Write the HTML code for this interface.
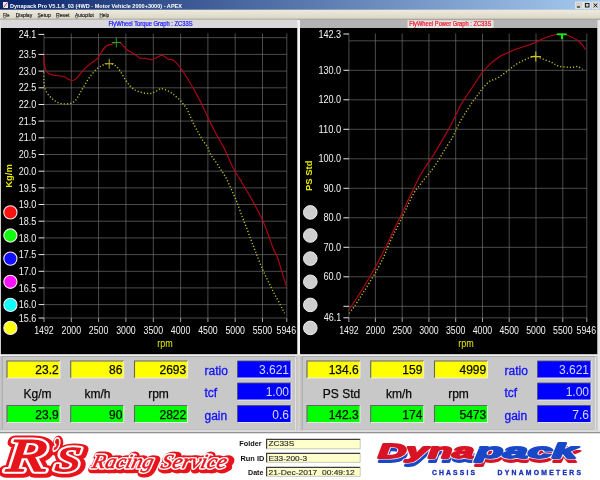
<!DOCTYPE html>
<html lang="en"><head><meta charset="utf-8"><title>Dynapack Pro V5.1.6_03 (4WD - Motor Vehicle 2000+3000) - APEX</title>
<style>html,body{margin:0;padding:0;background:#d4d0c8;overflow:hidden}svg{display:block;filter:blur(0.5px)}</style>
</head><body>
<svg width="600" height="480" viewBox="0 0 600 480" font-family="Liberation Sans, Arial, sans-serif">
<defs><linearGradient id="tb" x1="0" x2="1" y1="0" y2="0"><stop offset="0" stop-color="#0a246a"/><stop offset="1" stop-color="#a6caf0"/></linearGradient><linearGradient id="mb" x1="0" x2="0" y1="0" y2="1"><stop offset="0" stop-color="#eeebdc"/><stop offset="1" stop-color="#d8d4c6"/></linearGradient></defs>
<rect width="600" height="480" fill="#d4d0c8"/>
<rect x="0" y="0" width="600" height="10" fill="url(#tb)"/>
<rect x="3" y="2" width="5" height="6" fill="#e8e8f0"/><path d="M3.5 7.5L7.5 2.5" stroke="#c03030" stroke-width="1"/>
<text x="10.0" y="7.7" font-size="5.8" fill="#fff" text-anchor="start" font-weight="bold" textLength="172.0" lengthAdjust="spacingAndGlyphs" >Dynapack Pro V5.1.6_03 (4WD - Motor Vehicle 2000+3000) - APEX</text>
<rect x="575.5" y="2" width="7" height="6.5" fill="#d4d0c8" stroke="#fff" stroke-width="0.5"/>
<rect x="583.5" y="2" width="7" height="6.5" fill="#d4d0c8" stroke="#fff" stroke-width="0.5"/>
<rect x="592.0" y="2" width="7" height="6.5" fill="#d4d0c8" stroke="#fff" stroke-width="0.5"/>
<path d="M577 7h3" stroke="#000" stroke-width="1"/>
<rect x="585.5" y="3.5" width="3.5" height="3.5" fill="none" stroke="#000" stroke-width="0.8"/>
<path d="M593.7 3.5l3.6 3.6M597.3 3.5l-3.6 3.6" stroke="#000" stroke-width="0.9"/>
<rect x="0" y="9.7" width="600" height="10" fill="url(#mb)"/>
<text x="3.0" y="16.7" font-size="5.9" fill="#111" text-anchor="start" font-weight="normal" textLength="6.5" lengthAdjust="spacingAndGlyphs" stroke="#111" stroke-width="0.15">File</text>
<path d="M3.0 17.8h3" stroke="#333" stroke-width="0.5"/>
<text x="15.7" y="16.7" font-size="5.9" fill="#111" text-anchor="start" font-weight="normal" textLength="16.5" lengthAdjust="spacingAndGlyphs" stroke="#111" stroke-width="0.15">Display</text>
<path d="M15.7 17.8h3" stroke="#333" stroke-width="0.5"/>
<text x="37.5" y="16.7" font-size="5.9" fill="#111" text-anchor="start" font-weight="normal" textLength="13.2" lengthAdjust="spacingAndGlyphs" stroke="#111" stroke-width="0.15">Setup</text>
<path d="M37.5 17.8h3" stroke="#333" stroke-width="0.5"/>
<text x="56.0" y="16.7" font-size="5.9" fill="#111" text-anchor="start" font-weight="normal" textLength="13.5" lengthAdjust="spacingAndGlyphs" stroke="#111" stroke-width="0.15">Reset</text>
<path d="M56.0 17.8h3" stroke="#333" stroke-width="0.5"/>
<text x="75.0" y="16.7" font-size="5.9" fill="#111" text-anchor="start" font-weight="normal" textLength="18.8" lengthAdjust="spacingAndGlyphs" stroke="#111" stroke-width="0.15">Autopilot</text>
<path d="M75.0 17.8h3" stroke="#333" stroke-width="0.5"/>
<text x="99.5" y="16.7" font-size="5.9" fill="#111" text-anchor="start" font-weight="normal" textLength="9.5" lengthAdjust="spacingAndGlyphs" stroke="#111" stroke-width="0.15">Help</text>
<path d="M99.5 17.8h3" stroke="#333" stroke-width="0.5"/>
<rect x="0" y="18.8" width="600" height="0.8" fill="#85826f"/>
<rect x="0" y="19.6" width="298" height="8.4" fill="#d9d9dc"/>
<rect x="300" y="19.6" width="300" height="8.4" fill="#b4b4b4"/>
<rect x="407.5" y="20.3" width="86" height="7.7" fill="#e4e4e4"/>
<text x="150.5" y="26.2" font-size="6.6" fill="#1414ff" text-anchor="middle" font-weight="normal" textLength="84.0" lengthAdjust="spacingAndGlyphs" stroke="#1414ff" stroke-width="0.2">FlyWheel Torque Graph : ZC33S</text>
<text x="450.3" y="26.2" font-size="6.6" fill="#f01024" text-anchor="middle" font-weight="normal" textLength="82.0" lengthAdjust="spacingAndGlyphs" stroke="#f01024" stroke-width="0.2">FlyWheel Power Graph : ZC33S</text>
<rect x="0.5" y="28" width="297" height="326.5" fill="#000"/>
<rect x="300" y="28" width="297.5" height="326.5" fill="#000"/>
<path d="M44.0 318V322M71.3 318V322M98.6 318V322M125.9 318V322M153.3 318V322M180.6 318V322M207.9 318V322M235.2 318V322M262.5 318V322M286.8 318V322" stroke="#b4b4b4" stroke-width="0.9" fill="none"/>
<path d="M44.0 37.7H286.8M44.0 54.4H286.8M44.0 71.1H286.8M44.0 87.8H286.8M44.0 104.5H286.8M44.0 121.1H286.8M44.0 137.8H286.8M44.0 154.5H286.8M44.0 171.2H286.8M44.0 187.9H286.8M44.0 204.5H286.8M44.0 221.2H286.8M44.0 237.9H286.8M44.0 254.6H286.8M44.0 271.3H286.8M44.0 287.9H286.8M44.0 304.6H286.8M44.0 318.0H286.8M44.0 33.5V318M71.3 33.5V318M98.6 33.5V318M125.9 33.5V318M153.3 33.5V318M180.6 33.5V318M207.9 33.5V318M235.2 33.5V318M262.5 33.5V318M286.8 33.5V318" stroke="#7e7e7e" stroke-width="0.6" fill="none"/>
<path d="M38.5 54.4H44.0M38.5 71.1H44.0M38.5 87.8H44.0M38.5 104.5H44.0M38.5 121.1H44.0M38.5 137.8H44.0M38.5 154.5H44.0M38.5 171.2H44.0M38.5 187.9H44.0M38.5 204.5H44.0M38.5 221.2H44.0M38.5 237.9H44.0M38.5 254.6H44.0M38.5 271.3H44.0M38.5 287.9H44.0M38.5 304.6H44.0M38.5 318.0H44.0M38.5 34.4H44.0" stroke="#e8e8e8" stroke-width="1" fill="none"/>
<text x="36.2" y="38.0" font-size="10.2" fill="#f4f4f4" text-anchor="end" font-weight="normal" textLength="17.5" lengthAdjust="spacingAndGlyphs" >24.1</text>
<text x="36.2" y="58.0" font-size="10.2" fill="#f4f4f4" text-anchor="end" font-weight="normal" textLength="17.5" lengthAdjust="spacingAndGlyphs" >23.5</text>
<text x="36.2" y="74.7" font-size="10.2" fill="#f4f4f4" text-anchor="end" font-weight="normal" textLength="17.5" lengthAdjust="spacingAndGlyphs" >23.0</text>
<text x="36.2" y="91.4" font-size="10.2" fill="#f4f4f4" text-anchor="end" font-weight="normal" textLength="17.5" lengthAdjust="spacingAndGlyphs" >22.5</text>
<text x="36.2" y="108.1" font-size="10.2" fill="#f4f4f4" text-anchor="end" font-weight="normal" textLength="17.5" lengthAdjust="spacingAndGlyphs" >22.0</text>
<text x="36.2" y="124.7" font-size="10.2" fill="#f4f4f4" text-anchor="end" font-weight="normal" textLength="17.5" lengthAdjust="spacingAndGlyphs" >21.5</text>
<text x="36.2" y="141.4" font-size="10.2" fill="#f4f4f4" text-anchor="end" font-weight="normal" textLength="17.5" lengthAdjust="spacingAndGlyphs" >21.0</text>
<text x="36.2" y="158.1" font-size="10.2" fill="#f4f4f4" text-anchor="end" font-weight="normal" textLength="17.5" lengthAdjust="spacingAndGlyphs" >20.5</text>
<text x="36.2" y="174.8" font-size="10.2" fill="#f4f4f4" text-anchor="end" font-weight="normal" textLength="17.5" lengthAdjust="spacingAndGlyphs" >20.0</text>
<text x="36.2" y="191.5" font-size="10.2" fill="#f4f4f4" text-anchor="end" font-weight="normal" textLength="17.5" lengthAdjust="spacingAndGlyphs" >19.5</text>
<text x="36.2" y="208.1" font-size="10.2" fill="#f4f4f4" text-anchor="end" font-weight="normal" textLength="17.5" lengthAdjust="spacingAndGlyphs" >19.0</text>
<text x="36.2" y="224.8" font-size="10.2" fill="#f4f4f4" text-anchor="end" font-weight="normal" textLength="17.5" lengthAdjust="spacingAndGlyphs" >18.5</text>
<text x="36.2" y="241.5" font-size="10.2" fill="#f4f4f4" text-anchor="end" font-weight="normal" textLength="17.5" lengthAdjust="spacingAndGlyphs" >18.0</text>
<text x="36.2" y="258.2" font-size="10.2" fill="#f4f4f4" text-anchor="end" font-weight="normal" textLength="17.5" lengthAdjust="spacingAndGlyphs" >17.5</text>
<text x="36.2" y="274.9" font-size="10.2" fill="#f4f4f4" text-anchor="end" font-weight="normal" textLength="17.5" lengthAdjust="spacingAndGlyphs" >17.0</text>
<text x="36.2" y="291.5" font-size="10.2" fill="#f4f4f4" text-anchor="end" font-weight="normal" textLength="17.5" lengthAdjust="spacingAndGlyphs" >16.5</text>
<text x="36.2" y="308.2" font-size="10.2" fill="#f4f4f4" text-anchor="end" font-weight="normal" textLength="17.5" lengthAdjust="spacingAndGlyphs" >16.0</text>
<text x="36.2" y="321.6" font-size="10.2" fill="#f4f4f4" text-anchor="end" font-weight="normal" textLength="17.5" lengthAdjust="spacingAndGlyphs" >15.6</text>
<text x="44.0" y="334.0" font-size="10.2" fill="#f4f4f4" text-anchor="middle" font-weight="normal" textLength="19.5" lengthAdjust="spacingAndGlyphs" >1492</text>
<text x="71.3" y="334.0" font-size="10.2" fill="#f4f4f4" text-anchor="middle" font-weight="normal" textLength="19.5" lengthAdjust="spacingAndGlyphs" >2000</text>
<text x="98.6" y="334.0" font-size="10.2" fill="#f4f4f4" text-anchor="middle" font-weight="normal" textLength="19.5" lengthAdjust="spacingAndGlyphs" >2500</text>
<text x="125.9" y="334.0" font-size="10.2" fill="#f4f4f4" text-anchor="middle" font-weight="normal" textLength="19.5" lengthAdjust="spacingAndGlyphs" >3000</text>
<text x="153.3" y="334.0" font-size="10.2" fill="#f4f4f4" text-anchor="middle" font-weight="normal" textLength="19.5" lengthAdjust="spacingAndGlyphs" >3500</text>
<text x="180.6" y="334.0" font-size="10.2" fill="#f4f4f4" text-anchor="middle" font-weight="normal" textLength="19.5" lengthAdjust="spacingAndGlyphs" >4000</text>
<text x="207.9" y="334.0" font-size="10.2" fill="#f4f4f4" text-anchor="middle" font-weight="normal" textLength="19.5" lengthAdjust="spacingAndGlyphs" >4500</text>
<text x="235.2" y="334.0" font-size="10.2" fill="#f4f4f4" text-anchor="middle" font-weight="normal" textLength="19.5" lengthAdjust="spacingAndGlyphs" >5000</text>
<text x="262.5" y="334.0" font-size="10.2" fill="#f4f4f4" text-anchor="middle" font-weight="normal" textLength="19.5" lengthAdjust="spacingAndGlyphs" >5500</text>
<text x="286.3" y="334.0" font-size="10.2" fill="#f4f4f4" text-anchor="middle" font-weight="normal" textLength="19.5" lengthAdjust="spacingAndGlyphs" >5946</text>
<text x="165.0" y="346.5" font-size="10" fill="#e8e800" text-anchor="middle" font-weight="normal" textLength="15.5" lengthAdjust="spacingAndGlyphs" >rpm</text>
<text transform="translate(12.3 176) rotate(-90)" font-size="9.5" font-weight="bold" fill="#e8e800" text-anchor="middle" textLength="23.5" lengthAdjust="spacingAndGlyphs">Kg/m</text>
<path d="M43.7 55.0C43.8 56.4 43.9 60.8 44.2 63.3C44.6 65.8 45.0 68.3 45.8 70.0C46.6 71.7 47.7 72.8 49.2 73.7C50.7 74.6 52.6 75.1 55.0 75.5C57.4 75.9 61.1 75.7 63.3 76.3C65.5 76.9 66.8 78.5 68.3 79.2C69.8 79.9 71.2 80.5 72.5 80.5C73.8 80.5 74.5 80.2 75.8 79.2C77.0 78.2 78.5 76.0 80.0 74.2C81.5 72.4 83.3 70.0 85.0 68.3C86.7 66.6 87.9 65.9 90.0 64.2C92.1 62.5 95.5 60.4 97.5 58.3C99.5 56.2 100.2 53.8 101.7 51.7C103.2 49.6 105.0 47.0 106.7 45.8C108.4 44.5 110.1 44.8 111.7 44.2C113.3 43.7 114.9 42.8 116.3 42.5C117.7 42.2 118.8 42.0 120.0 42.5C121.2 43.0 122.0 44.5 123.3 45.8C124.5 47.0 125.8 48.7 127.5 50.0C129.2 51.3 131.2 52.2 133.3 53.5C135.4 54.8 138.1 57.2 140.0 58.0C141.9 58.8 143.1 58.0 145.0 58.3C146.9 58.6 149.8 59.8 151.7 59.7C153.6 59.6 155.0 58.2 156.7 57.5C158.4 56.8 160.3 55.4 161.7 55.3C163.1 55.2 163.9 56.1 165.0 56.7C166.1 57.4 166.9 58.6 168.3 59.2C169.7 59.8 171.6 59.3 173.3 60.3C175.0 61.3 176.6 63.1 178.3 65.0C180.0 66.9 181.6 69.2 183.3 71.7C185.0 74.2 186.6 77.2 188.3 80.0C190.0 82.8 191.6 85.4 193.3 88.3C195.0 91.2 196.6 94.3 198.3 97.5C200.0 100.7 201.4 103.5 203.3 107.5C205.2 111.5 208.1 117.7 210.0 121.7C211.9 125.7 213.3 128.5 215.0 131.7C216.7 134.9 218.3 137.8 220.0 140.8C221.7 143.9 223.5 146.9 225.0 150.0C226.5 153.1 227.7 155.9 229.2 159.2C230.7 162.5 232.4 166.7 234.2 170.0C236.0 173.3 238.1 176.0 240.0 179.2C241.9 182.4 243.9 185.9 245.8 189.2C247.8 192.5 249.8 195.7 251.7 199.2C253.6 202.7 255.6 206.2 257.5 210.0C259.4 213.8 261.5 217.5 263.3 221.7C265.1 225.9 266.6 230.5 268.3 235.0C270.0 239.5 271.8 244.9 273.3 248.7C274.8 252.4 276.2 254.2 277.5 257.5C278.8 260.8 279.7 264.7 280.8 268.3C281.9 271.9 283.3 276.3 284.2 279.2C285.1 282.1 285.9 284.7 286.2 285.8" stroke="#c00018" stroke-width="1.05" fill="none" stroke-linejoin="round"/>
<path d="M43.7 72.5C43.8 74.6 43.7 81.7 44.2 85.0C44.7 88.3 45.5 90.3 46.7 92.5C48.0 94.7 50.0 96.7 51.7 98.3C53.4 99.9 54.8 101.1 56.7 102.0C58.6 102.9 60.9 103.6 63.3 103.8C65.6 104.0 68.7 103.9 70.8 103.3C72.9 102.7 74.3 101.7 75.8 100.0C77.3 98.3 78.6 95.7 80.0 93.3C81.4 90.9 82.5 88.6 84.2 85.8C85.9 83.0 87.8 79.6 90.0 76.7C92.2 73.8 95.1 70.3 97.5 68.3C99.9 66.3 102.2 65.3 104.2 64.5C106.2 63.7 107.4 63.6 109.2 63.7C111.0 63.8 113.2 64.1 115.0 65.3C116.8 66.5 118.3 68.5 120.0 70.8C121.7 73.1 123.3 76.7 125.0 79.2C126.7 81.7 128.3 84.2 130.0 86.0C131.7 87.8 133.3 89.0 135.0 90.0C136.7 91.0 138.2 91.5 140.0 92.0C141.8 92.5 143.9 93.1 145.8 93.3C147.8 93.5 149.9 93.7 151.7 93.3C153.5 92.9 155.2 91.5 156.7 90.8C158.2 90.0 159.4 89.0 160.8 88.8C162.2 88.6 163.3 88.9 165.0 89.5C166.7 90.1 169.1 91.5 170.8 92.5C172.5 93.5 173.5 94.5 175.0 95.8C176.5 97.0 178.6 98.6 180.0 100.0C181.4 101.4 182.2 102.8 183.3 104.2C184.4 105.6 185.6 106.6 186.7 108.5C187.8 110.4 188.8 113.0 190.0 115.8C191.2 118.5 192.8 122.2 194.2 125.0C195.6 127.8 196.9 130.0 198.3 132.5C199.7 135.0 201.0 137.6 202.5 140.0C204.0 142.4 206.2 144.5 207.5 146.7C208.8 148.9 208.8 151.0 210.0 153.3C211.2 155.7 213.3 158.3 215.0 160.8C216.7 163.3 218.6 166.2 220.0 168.3C221.4 170.4 222.2 171.5 223.3 173.3C224.4 175.1 225.4 176.7 226.7 179.2C227.9 181.7 229.4 185.2 230.8 188.3C232.2 191.4 233.8 194.6 235.0 197.5C236.2 200.4 237.1 202.5 238.3 205.8C239.6 209.1 241.1 213.8 242.5 217.5C243.9 221.2 245.3 224.6 246.7 228.3C248.1 232.0 249.6 236.2 250.8 239.5C252.1 242.8 253.1 245.4 254.2 248.3C255.3 251.2 256.1 253.2 257.5 256.7C258.9 260.2 261.0 265.6 262.5 269.2C264.0 272.8 265.3 275.4 266.7 278.3C268.1 281.2 269.4 283.9 270.8 286.7C272.2 289.5 273.6 292.4 275.0 295.0C276.4 297.6 277.9 300.1 279.2 302.5C280.4 304.9 281.6 307.4 282.5 309.2C283.4 311.0 284.2 312.6 284.5 313.3" stroke="#bcbc28" stroke-width="1.4" fill="none" stroke-dasharray="1.2 2.0"/>
<path d="M111.8 42.5h9M116.3 37.5v10" stroke="#1ca824" stroke-width="1.0" fill="none"/>
<path d="M104.7 63.7h9M109.2 58.7v10" stroke="#b8b020" stroke-width="1.0" fill="none"/>
<circle cx="10.4" cy="212.4" r="6.6" fill="#ff1010" stroke="#f8eaea" stroke-width="1.1"/>
<circle cx="10.4" cy="235.5" r="6.6" fill="#10ff10" stroke="#f8eaea" stroke-width="1.1"/>
<circle cx="10.4" cy="258.6" r="6.6" fill="#1010ff" stroke="#f8eaea" stroke-width="1.1"/>
<circle cx="10.4" cy="281.8" r="6.6" fill="#ff10ff" stroke="#f8eaea" stroke-width="1.1"/>
<circle cx="10.4" cy="304.9" r="6.6" fill="#10ffff" stroke="#f8eaea" stroke-width="1.1"/>
<circle cx="10.4" cy="327.9" r="6.6" fill="#ffff10" stroke="#f8eaea" stroke-width="1.1"/>
<path d="M348.9 318V322M375.4 318V322M402.2 318V322M428.9 318V322M455.7 318V322M482.5 318V322M509.2 318V322M536.0 318V322M562.8 318V322M586.8 318V322" stroke="#b4b4b4" stroke-width="0.9" fill="none"/>
<path d="M348.9 40.8H586.8M348.9 70.3H586.8M348.9 99.8H586.8M348.9 129.3H586.8M348.9 158.8H586.8M348.9 188.3H586.8M348.9 217.8H586.8M348.9 247.3H586.8M348.9 276.8H586.8M348.9 306.3H586.8M348.9 317.8H586.8M348.9 33.5V318M375.4 33.5V318M402.2 33.5V318M428.9 33.5V318M455.7 33.5V318M482.5 33.5V318M509.2 33.5V318M536.0 33.5V318M562.8 33.5V318M586.8 33.5V318" stroke="#7e7e7e" stroke-width="0.6" fill="none"/>
<path d="M343.4 70.3H348.9M343.4 99.8H348.9M343.4 129.3H348.9M343.4 158.8H348.9M343.4 188.3H348.9M343.4 217.8H348.9M343.4 247.3H348.9M343.4 276.8H348.9M343.4 306.3H348.9M343.4 317.8H348.9M343.4 34.0H348.9" stroke="#e8e8e8" stroke-width="1" fill="none"/>
<text x="341.2" y="37.6" font-size="10.2" fill="#f4f4f4" text-anchor="end" font-weight="normal" textLength="22.8" lengthAdjust="spacingAndGlyphs" >142.3</text>
<text x="341.2" y="73.9" font-size="10.2" fill="#f4f4f4" text-anchor="end" font-weight="normal" textLength="22.8" lengthAdjust="spacingAndGlyphs" >130.0</text>
<text x="341.2" y="103.4" font-size="10.2" fill="#f4f4f4" text-anchor="end" font-weight="normal" textLength="22.8" lengthAdjust="spacingAndGlyphs" >120.0</text>
<text x="341.2" y="132.9" font-size="10.2" fill="#f4f4f4" text-anchor="end" font-weight="normal" textLength="22.8" lengthAdjust="spacingAndGlyphs" >110.0</text>
<text x="341.2" y="162.4" font-size="10.2" fill="#f4f4f4" text-anchor="end" font-weight="normal" textLength="22.8" lengthAdjust="spacingAndGlyphs" >100.0</text>
<text x="341.2" y="191.9" font-size="10.2" fill="#f4f4f4" text-anchor="end" font-weight="normal" textLength="17.8" lengthAdjust="spacingAndGlyphs" >90.0</text>
<text x="341.2" y="221.4" font-size="10.2" fill="#f4f4f4" text-anchor="end" font-weight="normal" textLength="17.8" lengthAdjust="spacingAndGlyphs" >80.0</text>
<text x="341.2" y="250.9" font-size="10.2" fill="#f4f4f4" text-anchor="end" font-weight="normal" textLength="17.8" lengthAdjust="spacingAndGlyphs" >70.0</text>
<text x="341.2" y="280.4" font-size="10.2" fill="#f4f4f4" text-anchor="end" font-weight="normal" textLength="17.8" lengthAdjust="spacingAndGlyphs" >60.0</text>
<text x="341.2" y="321.4" font-size="10.2" fill="#f4f4f4" text-anchor="end" font-weight="normal" textLength="17.5" lengthAdjust="spacingAndGlyphs" >46.1</text>
<text x="348.9" y="334.0" font-size="10.2" fill="#f4f4f4" text-anchor="middle" font-weight="normal" textLength="19.5" lengthAdjust="spacingAndGlyphs" >1492</text>
<text x="375.4" y="334.0" font-size="10.2" fill="#f4f4f4" text-anchor="middle" font-weight="normal" textLength="19.5" lengthAdjust="spacingAndGlyphs" >2000</text>
<text x="402.2" y="334.0" font-size="10.2" fill="#f4f4f4" text-anchor="middle" font-weight="normal" textLength="19.5" lengthAdjust="spacingAndGlyphs" >2500</text>
<text x="428.9" y="334.0" font-size="10.2" fill="#f4f4f4" text-anchor="middle" font-weight="normal" textLength="19.5" lengthAdjust="spacingAndGlyphs" >3000</text>
<text x="455.7" y="334.0" font-size="10.2" fill="#f4f4f4" text-anchor="middle" font-weight="normal" textLength="19.5" lengthAdjust="spacingAndGlyphs" >3500</text>
<text x="482.5" y="334.0" font-size="10.2" fill="#f4f4f4" text-anchor="middle" font-weight="normal" textLength="19.5" lengthAdjust="spacingAndGlyphs" >4000</text>
<text x="509.2" y="334.0" font-size="10.2" fill="#f4f4f4" text-anchor="middle" font-weight="normal" textLength="19.5" lengthAdjust="spacingAndGlyphs" >4500</text>
<text x="536.0" y="334.0" font-size="10.2" fill="#f4f4f4" text-anchor="middle" font-weight="normal" textLength="19.5" lengthAdjust="spacingAndGlyphs" >5000</text>
<text x="562.8" y="334.0" font-size="10.2" fill="#f4f4f4" text-anchor="middle" font-weight="normal" textLength="19.5" lengthAdjust="spacingAndGlyphs" >5500</text>
<text x="586.3" y="334.0" font-size="10.2" fill="#f4f4f4" text-anchor="middle" font-weight="normal" textLength="19.5" lengthAdjust="spacingAndGlyphs" >5946</text>
<text x="466.0" y="346.5" font-size="10" fill="#e8e800" text-anchor="middle" font-weight="normal" textLength="15.5" lengthAdjust="spacingAndGlyphs" >rpm</text>
<text transform="translate(311.8 175.8) rotate(-90)" font-size="9.5" font-weight="bold" fill="#e8e800" text-anchor="middle" textLength="30.5" lengthAdjust="spacingAndGlyphs">PS Std</text>
<path d="M348.7 309.7C350.0 307.8 354.0 302.4 356.7 298.3C359.4 294.2 362.2 289.6 365.0 285.0C367.8 280.4 370.5 275.8 373.3 270.8C376.1 265.8 379.2 259.9 381.7 255.0C384.2 250.2 386.2 245.9 388.3 241.7C390.4 237.4 392.1 233.5 394.0 229.5C395.9 225.5 397.9 221.9 400.0 217.5C402.1 213.1 404.5 208.0 406.7 203.3C408.9 198.6 411.1 193.8 413.3 189.2C415.5 184.6 417.8 179.8 420.0 175.8C422.2 171.8 424.6 168.2 426.7 165.0C428.8 161.8 430.8 159.2 432.5 156.7C434.2 154.1 434.9 152.8 436.7 149.7C438.5 146.6 441.1 142.1 443.3 138.3C445.5 134.5 447.9 130.6 450.0 126.7C452.1 122.8 454.0 118.6 455.8 115.0C457.6 111.4 459.0 108.2 460.8 105.0C462.6 101.8 464.6 99.0 466.7 95.8C468.8 92.6 471.2 89.0 473.3 85.8C475.4 82.6 477.5 79.2 479.2 76.7C480.9 74.2 481.4 73.3 483.5 71.0C485.6 68.7 488.9 65.2 491.7 62.7C494.5 60.2 497.4 57.9 500.3 56.2C503.2 54.5 506.1 53.6 509.0 52.3C511.9 51.0 514.8 49.7 517.7 48.6C520.6 47.5 523.4 46.8 526.3 45.8C529.2 44.8 532.1 43.9 535.0 42.7C537.9 41.5 540.8 39.6 543.7 38.4C546.6 37.2 549.8 36.3 552.3 35.6C554.8 34.9 556.6 34.3 558.8 34.1C561.0 33.9 563.1 34.0 565.3 34.5C567.5 35.0 569.6 36.0 571.8 37.1C574.0 38.2 576.5 39.6 578.3 41.0C580.1 42.4 581.5 43.8 582.7 45.3C583.9 46.8 585.0 49.0 585.5 49.7" stroke="#c00018" stroke-width="1.05" fill="none" stroke-linejoin="round"/>
<path d="M349.2 313.3C350.0 312.2 352.1 309.8 354.2 306.7C356.3 303.6 359.1 299.2 361.7 295.0C364.3 290.8 367.2 286.3 370.0 281.7C372.8 277.1 375.9 271.8 378.3 267.5C380.7 263.2 382.5 259.4 384.2 255.8C385.9 252.2 386.8 249.3 388.3 245.8C389.8 242.3 391.9 237.9 393.3 235.0C394.7 232.1 395.2 231.4 396.7 228.3C398.2 225.2 400.6 220.7 402.5 216.7C404.4 212.7 406.4 208.2 408.3 204.2C410.2 200.2 412.4 195.6 414.2 192.5C416.0 189.4 417.5 188.0 419.2 185.8C420.9 183.6 422.5 181.3 424.2 179.2C425.9 177.1 427.5 175.4 429.2 173.3C430.9 171.2 432.5 169.0 434.2 166.7C435.9 164.3 437.5 162.0 439.2 159.2C440.9 156.4 442.3 153.6 444.5 150.0C446.7 146.4 450.3 141.4 452.5 137.5C454.7 133.6 455.8 130.0 457.5 126.7C459.2 123.4 460.7 120.6 462.5 117.5C464.3 114.4 466.5 111.1 468.3 108.3C470.1 105.5 471.6 103.1 473.3 100.8C475.0 98.5 476.7 96.3 478.3 94.2C479.9 92.1 480.9 90.1 482.8 88.0C484.7 85.9 486.9 83.2 489.5 81.5C492.1 79.8 495.3 79.3 498.2 77.6C501.1 75.9 503.9 73.6 506.8 71.5C509.7 69.4 512.6 66.7 515.5 64.8C518.4 62.9 521.7 61.4 524.2 60.1C526.7 58.9 528.7 57.9 530.7 57.3C532.7 56.6 533.9 55.9 536.1 56.2C538.3 56.6 541.0 58.3 543.7 59.4C546.4 60.5 549.9 61.6 552.3 62.7C554.6 63.8 555.6 65.2 557.8 65.9C560.0 66.6 563.0 66.8 565.3 67.0C567.6 67.2 569.8 67.5 571.8 67.4C573.8 67.3 575.5 66.3 577.3 66.6C579.1 66.9 581.8 68.8 582.7 69.2" stroke="#bcbc28" stroke-width="1.4" fill="none" stroke-dasharray="1.2 2.0"/>
<path d="M556.8 34.3h10" stroke="#10f010" stroke-width="1.8" fill="none"/><path d="M562 34.3v5" stroke="#10f010" stroke-width="2" fill="none"/>
<path d="M530.8 56.6h10M535.8 51.6v10" stroke="#d0c820" stroke-width="1.1" fill="none"/>
<circle cx="310.3" cy="212.4" r="6.8" fill="#cecece" stroke="#f0f0f0" stroke-width="1"/>
<circle cx="310.3" cy="235.5" r="6.8" fill="#cecece" stroke="#f0f0f0" stroke-width="1"/>
<circle cx="310.3" cy="258.6" r="6.8" fill="#cecece" stroke="#f0f0f0" stroke-width="1"/>
<circle cx="310.3" cy="281.8" r="6.8" fill="#cecece" stroke="#f0f0f0" stroke-width="1"/>
<circle cx="310.3" cy="304.9" r="6.8" fill="#cecece" stroke="#f0f0f0" stroke-width="1"/>
<circle cx="310.3" cy="327.9" r="6.8" fill="#cecece" stroke="#f0f0f0" stroke-width="1"/>
<rect x="297.5" y="20" width="2.5" height="335" fill="#f4f4f4"/>
<rect x="597.5" y="20" width="2.5" height="412" fill="#e8e8e8"/>
<rect x="0" y="20" width="0.8" height="412" fill="#e8e8e8"/>
<rect x="0.0" y="354.5" width="297.5" height="77.5" fill="#c6c6c6"/>
<rect x="0.0" y="354.5" width="297.5" height="1.6" fill="#f0f0f0"/>
<rect x="2.2" y="356.5" width="293" height="73.5" fill="#c8c8c8" stroke="#a0a0a0" stroke-width="0.8"/>
<path d="M2.2 430.3H295.4V357" stroke="#eeeeee" stroke-width="0.9" fill="none"/>
<rect x="7.0" y="361.0" width="53" height="17.0" fill="#ffff00"/>
<path d="M7.0 378.0V361.0H60.0" stroke="#64646c" stroke-width="1.1" fill="none"/>
<path d="M7.0 378.0H60.0V361.0" stroke="#f0f0f0" stroke-width="0.9" fill="none"/>
<text x="58.7" y="374.0" font-size="12" fill="#080808" text-anchor="end" font-weight="normal" stroke="#080808" stroke-width="0.25">23.2</text>
<rect x="7.0" y="405.5" width="53" height="17.0" fill="#00ff00"/>
<path d="M7.0 422.5V405.5H60.0" stroke="#64646c" stroke-width="1.1" fill="none"/>
<path d="M7.0 422.5H60.0V405.5" stroke="#f0f0f0" stroke-width="0.9" fill="none"/>
<text x="58.7" y="418.5" font-size="12" fill="#080808" text-anchor="end" font-weight="normal" stroke="#080808" stroke-width="0.25">23.9</text>
<rect x="70.7" y="361.0" width="53" height="17.0" fill="#ffff00"/>
<path d="M70.7 378.0V361.0H123.7" stroke="#64646c" stroke-width="1.1" fill="none"/>
<path d="M70.7 378.0H123.7V361.0" stroke="#f0f0f0" stroke-width="0.9" fill="none"/>
<text x="122.4" y="374.0" font-size="12" fill="#080808" text-anchor="end" font-weight="normal" stroke="#080808" stroke-width="0.25">86</text>
<rect x="70.7" y="405.5" width="53" height="17.0" fill="#00ff00"/>
<path d="M70.7 422.5V405.5H123.7" stroke="#64646c" stroke-width="1.1" fill="none"/>
<path d="M70.7 422.5H123.7V405.5" stroke="#f0f0f0" stroke-width="0.9" fill="none"/>
<text x="122.4" y="418.5" font-size="12" fill="#080808" text-anchor="end" font-weight="normal" stroke="#080808" stroke-width="0.25">90</text>
<rect x="134.5" y="361.0" width="53" height="17.0" fill="#ffff00"/>
<path d="M134.5 378.0V361.0H187.5" stroke="#64646c" stroke-width="1.1" fill="none"/>
<path d="M134.5 378.0H187.5V361.0" stroke="#f0f0f0" stroke-width="0.9" fill="none"/>
<text x="186.2" y="374.0" font-size="12" fill="#080808" text-anchor="end" font-weight="normal" stroke="#080808" stroke-width="0.25">2693</text>
<rect x="134.5" y="405.5" width="53" height="17.0" fill="#00ff00"/>
<path d="M134.5 422.5V405.5H187.5" stroke="#64646c" stroke-width="1.1" fill="none"/>
<path d="M134.5 422.5H187.5V405.5" stroke="#f0f0f0" stroke-width="0.9" fill="none"/>
<text x="186.2" y="418.5" font-size="12" fill="#080808" text-anchor="end" font-weight="normal" stroke="#080808" stroke-width="0.25">2822</text>
<text x="37.5" y="398.1" font-size="12" fill="#080808" text-anchor="middle" font-weight="normal" stroke="#080808" stroke-width="0.25">Kg/m</text>
<text x="97.5" y="398.1" font-size="12" fill="#080808" text-anchor="middle" font-weight="normal" stroke="#080808" stroke-width="0.25">km/h</text>
<text x="158.5" y="398.1" font-size="12" fill="#080808" text-anchor="middle" font-weight="normal" stroke="#080808" stroke-width="0.25">rpm</text>
<text x="204.5" y="375.2" font-size="12" fill="#1010ff" text-anchor="start" font-weight="normal" stroke="#1010ff" stroke-width="0.3">ratio</text>
<text x="204.5" y="397.4" font-size="12" fill="#1010ff" text-anchor="start" font-weight="normal" stroke="#1010ff" stroke-width="0.3">tcf</text>
<text x="204.5" y="419.7" font-size="12" fill="#1010ff" text-anchor="start" font-weight="normal" stroke="#1010ff" stroke-width="0.3">gain</text>
<rect x="237.5" y="361.0" width="53.5" height="17" fill="#0000ff"/>
<path d="M237.5 378.0V361.0H291.0" stroke="#505080" stroke-width="0.9" fill="none"/>
<path d="M237.5 378.0H291.0V361.0" stroke="#f0f0f0" stroke-width="0.9" fill="none"/>
<text x="289.0" y="374.0" font-size="12" fill="#d8d8ff" text-anchor="end" font-weight="normal" >3.621</text>
<rect x="237.5" y="383.0" width="53.5" height="17" fill="#0000ff"/>
<path d="M237.5 400.0V383.0H291.0" stroke="#505080" stroke-width="0.9" fill="none"/>
<path d="M237.5 400.0H291.0V383.0" stroke="#f0f0f0" stroke-width="0.9" fill="none"/>
<text x="289.0" y="396.0" font-size="12" fill="#d8d8ff" text-anchor="end" font-weight="normal" >1.00</text>
<rect x="237.5" y="405.5" width="53.5" height="17" fill="#0000ff"/>
<path d="M237.5 422.5V405.5H291.0" stroke="#505080" stroke-width="0.9" fill="none"/>
<path d="M237.5 422.5H291.0V405.5" stroke="#f0f0f0" stroke-width="0.9" fill="none"/>
<text x="289.0" y="418.5" font-size="12" fill="#d8d8ff" text-anchor="end" font-weight="normal" >0.6</text>
<rect x="300.0" y="354.5" width="297.5" height="77.5" fill="#c6c6c6"/>
<rect x="300.0" y="354.5" width="297.5" height="1.6" fill="#f0f0f0"/>
<rect x="302.2" y="356.5" width="293" height="73.5" fill="#c8c8c8" stroke="#a0a0a0" stroke-width="0.8"/>
<path d="M302.2 430.3H595.4V357" stroke="#eeeeee" stroke-width="0.9" fill="none"/>
<rect x="307.0" y="361.0" width="53" height="17.0" fill="#ffff00"/>
<path d="M307.0 378.0V361.0H360.0" stroke="#64646c" stroke-width="1.1" fill="none"/>
<path d="M307.0 378.0H360.0V361.0" stroke="#f0f0f0" stroke-width="0.9" fill="none"/>
<text x="358.7" y="374.0" font-size="12" fill="#080808" text-anchor="end" font-weight="normal" stroke="#080808" stroke-width="0.25">134.6</text>
<rect x="307.0" y="405.5" width="53" height="17.0" fill="#00ff00"/>
<path d="M307.0 422.5V405.5H360.0" stroke="#64646c" stroke-width="1.1" fill="none"/>
<path d="M307.0 422.5H360.0V405.5" stroke="#f0f0f0" stroke-width="0.9" fill="none"/>
<text x="358.7" y="418.5" font-size="12" fill="#080808" text-anchor="end" font-weight="normal" stroke="#080808" stroke-width="0.25">142.3</text>
<rect x="370.7" y="361.0" width="53" height="17.0" fill="#ffff00"/>
<path d="M370.7 378.0V361.0H423.7" stroke="#64646c" stroke-width="1.1" fill="none"/>
<path d="M370.7 378.0H423.7V361.0" stroke="#f0f0f0" stroke-width="0.9" fill="none"/>
<text x="422.4" y="374.0" font-size="12" fill="#080808" text-anchor="end" font-weight="normal" stroke="#080808" stroke-width="0.25">159</text>
<rect x="370.7" y="405.5" width="53" height="17.0" fill="#00ff00"/>
<path d="M370.7 422.5V405.5H423.7" stroke="#64646c" stroke-width="1.1" fill="none"/>
<path d="M370.7 422.5H423.7V405.5" stroke="#f0f0f0" stroke-width="0.9" fill="none"/>
<text x="422.4" y="418.5" font-size="12" fill="#080808" text-anchor="end" font-weight="normal" stroke="#080808" stroke-width="0.25">174</text>
<rect x="434.5" y="361.0" width="53" height="17.0" fill="#ffff00"/>
<path d="M434.5 378.0V361.0H487.5" stroke="#64646c" stroke-width="1.1" fill="none"/>
<path d="M434.5 378.0H487.5V361.0" stroke="#f0f0f0" stroke-width="0.9" fill="none"/>
<text x="486.2" y="374.0" font-size="12" fill="#080808" text-anchor="end" font-weight="normal" stroke="#080808" stroke-width="0.25">4999</text>
<rect x="434.5" y="405.5" width="53" height="17.0" fill="#00ff00"/>
<path d="M434.5 422.5V405.5H487.5" stroke="#64646c" stroke-width="1.1" fill="none"/>
<path d="M434.5 422.5H487.5V405.5" stroke="#f0f0f0" stroke-width="0.9" fill="none"/>
<text x="486.2" y="418.5" font-size="12" fill="#080808" text-anchor="end" font-weight="normal" stroke="#080808" stroke-width="0.25">5473</text>
<text x="341.5" y="398.1" font-size="12" fill="#080808" text-anchor="middle" font-weight="normal" stroke="#080808" stroke-width="0.25">PS Std</text>
<text x="399.0" y="398.1" font-size="12" fill="#080808" text-anchor="middle" font-weight="normal" stroke="#080808" stroke-width="0.25">km/h</text>
<text x="458.5" y="398.1" font-size="12" fill="#080808" text-anchor="middle" font-weight="normal" stroke="#080808" stroke-width="0.25">rpm</text>
<text x="504.5" y="375.2" font-size="12" fill="#1010ff" text-anchor="start" font-weight="normal" stroke="#1010ff" stroke-width="0.3">ratio</text>
<text x="504.5" y="397.4" font-size="12" fill="#1010ff" text-anchor="start" font-weight="normal" stroke="#1010ff" stroke-width="0.3">tcf</text>
<text x="504.5" y="419.7" font-size="12" fill="#1010ff" text-anchor="start" font-weight="normal" stroke="#1010ff" stroke-width="0.3">gain</text>
<rect x="537.5" y="361.0" width="53.5" height="17" fill="#0000ff"/>
<path d="M537.5 378.0V361.0H591.0" stroke="#505080" stroke-width="0.9" fill="none"/>
<path d="M537.5 378.0H591.0V361.0" stroke="#f0f0f0" stroke-width="0.9" fill="none"/>
<text x="589.0" y="374.0" font-size="12" fill="#d8d8ff" text-anchor="end" font-weight="normal" >3.621</text>
<rect x="537.5" y="383.0" width="53.5" height="17" fill="#0000ff"/>
<path d="M537.5 400.0V383.0H591.0" stroke="#505080" stroke-width="0.9" fill="none"/>
<path d="M537.5 400.0H591.0V383.0" stroke="#f0f0f0" stroke-width="0.9" fill="none"/>
<text x="589.0" y="396.0" font-size="12" fill="#d8d8ff" text-anchor="end" font-weight="normal" >1.00</text>
<rect x="537.5" y="405.5" width="53.5" height="17" fill="#0000ff"/>
<path d="M537.5 422.5V405.5H591.0" stroke="#505080" stroke-width="0.9" fill="none"/>
<path d="M537.5 422.5H591.0V405.5" stroke="#f0f0f0" stroke-width="0.9" fill="none"/>
<text x="589.0" y="418.5" font-size="12" fill="#d8d8ff" text-anchor="end" font-weight="normal" >7.6</text>
<rect x="0" y="430.4" width="600" height="2" fill="#dcdcdc"/>
<rect x="0" y="432.3" width="600" height="1.1" fill="#777"/>
<rect x="0" y="433.4" width="600" height="47" fill="#ffffff"/>
<text x="261.7" y="446.3" font-size="8" fill="#101010" text-anchor="end" font-weight="bold" textLength="22.4" lengthAdjust="spacingAndGlyphs" >Folder</text>
<rect x="266.2" y="439.0" width="94" height="9.8" fill="#ffffcc"/>
<path d="M266.6 448.8V439.4H360.2" stroke="#3c3c3c" stroke-width="1.2" fill="none"/>
<path d="M266.6 448.8H360.2V439.4" stroke="#b0b0a0" stroke-width="0.7" fill="none"/>
<text x="268.5" y="446.3" font-size="8" fill="#2a2a2a" stroke="#2a2a2a" stroke-width="0.15" textLength="25.7" lengthAdjust="spacingAndGlyphs" style="white-space:pre">ZC33S</text>
<text x="264.3" y="460.5" font-size="8" fill="#101010" text-anchor="end" font-weight="bold" textLength="23.8" lengthAdjust="spacingAndGlyphs" >Run ID</text>
<rect x="266.2" y="453.0" width="94" height="9.3" fill="#ffffcc"/>
<path d="M266.6 462.3V453.4H360.2" stroke="#3c3c3c" stroke-width="1.2" fill="none"/>
<path d="M266.6 462.3H360.2V453.4" stroke="#b0b0a0" stroke-width="0.7" fill="none"/>
<text x="268.5" y="460.5" font-size="8" fill="#2a2a2a" stroke="#2a2a2a" stroke-width="0.15" textLength="38.5" lengthAdjust="spacingAndGlyphs" style="white-space:pre">E33-200-3</text>
<text x="263.4" y="474.5" font-size="8" fill="#101010" text-anchor="end" font-weight="bold" textLength="15.4" lengthAdjust="spacingAndGlyphs" >Date</text>
<rect x="266.2" y="467.0" width="94" height="9.3" fill="#ffffcc"/>
<path d="M266.6 476.3V467.4H360.2" stroke="#3c3c3c" stroke-width="1.2" fill="none"/>
<path d="M266.6 476.3H360.2V467.4" stroke="#b0b0a0" stroke-width="0.7" fill="none"/>
<text x="268.5" y="474.5" font-size="8" fill="#2a2a2a" stroke="#2a2a2a" stroke-width="0.15" textLength="86.3" lengthAdjust="spacingAndGlyphs" style="white-space:pre">21-Dec-2017  00:49:12</text>
<text transform="translate(7.0 471.7) skewX(-4)" x="0" y="0" font-family="Liberation Serif, serif" font-style="italic" font-weight="normal" font-size="47" textLength="40.0" lengthAdjust="spacingAndGlyphs" fill="#e8141c" stroke="#e8141c" stroke-width="11.5" stroke-linejoin="round">R</text>
<text transform="translate(50.0 467.0) skewX(-4)" x="0" y="0" font-family="Liberation Serif, serif" font-style="italic" font-weight="normal" font-size="40" textLength="9.0" lengthAdjust="spacingAndGlyphs" fill="#e8141c" stroke="#e8141c" stroke-width="10.0" stroke-linejoin="round">’</text>
<text transform="translate(55.7 471.7) skewX(-6)" x="0" y="0" font-family="Liberation Serif, serif" font-style="italic" font-weight="normal" font-size="35" textLength="24.0" lengthAdjust="spacingAndGlyphs" fill="#e8141c" stroke="#e8141c" stroke-width="10.5" stroke-linejoin="round">S</text>
<text transform="translate(93.0 469.2) skewX(-14)" x="0" y="0" font-family="Liberation Serif, serif" font-style="italic" font-weight="normal" font-size="20" textLength="61.0" lengthAdjust="spacingAndGlyphs" fill="#e8141c" stroke="#e8141c" stroke-width="8.6" stroke-linejoin="round">Racing</text>
<text transform="translate(162.6 469.2) skewX(-14)" x="0" y="0" font-family="Liberation Serif, serif" font-style="italic" font-weight="normal" font-size="20" textLength="65.5" lengthAdjust="spacingAndGlyphs" fill="#e8141c" stroke="#e8141c" stroke-width="8.6" stroke-linejoin="round">Service</text>
<text transform="translate(6.0 470.5) skewX(-4)" x="0" y="0" font-family="Liberation Serif, serif" font-style="italic" font-weight="normal" font-size="47" textLength="40.0" lengthAdjust="spacingAndGlyphs" fill="#fff" stroke="#fff" stroke-width="5.4" stroke-linejoin="round">R</text>
<text transform="translate(49.0 466.0) skewX(-4)" x="0" y="0" font-family="Liberation Serif, serif" font-style="italic" font-weight="normal" font-size="40" textLength="9.0" lengthAdjust="spacingAndGlyphs" fill="#fff" stroke="#fff" stroke-width="5.0" stroke-linejoin="round">’</text>
<text transform="translate(54.5 470.5) skewX(-6)" x="0" y="0" font-family="Liberation Serif, serif" font-style="italic" font-weight="normal" font-size="35" textLength="24.0" lengthAdjust="spacingAndGlyphs" fill="#fff" stroke="#fff" stroke-width="5.0" stroke-linejoin="round">S</text>
<text transform="translate(91.0 468.0) skewX(-14)" x="0" y="0" font-family="Liberation Serif, serif" font-style="italic" font-weight="normal" font-size="20" textLength="61.0" lengthAdjust="spacingAndGlyphs" fill="#fff" stroke="#fff" stroke-width="3.4" stroke-linejoin="round">Racing</text>
<text transform="translate(160.0 468.0) skewX(-14)" x="0" y="0" font-family="Liberation Serif, serif" font-style="italic" font-weight="normal" font-size="20" textLength="65.5" lengthAdjust="spacingAndGlyphs" fill="#fff" stroke="#fff" stroke-width="3.4" stroke-linejoin="round">Service</text>
<text transform="translate(6.0 470.5) skewX(-4)" x="0" y="0" font-family="Liberation Serif, serif" font-style="italic" font-weight="normal" font-size="47" textLength="40.0" lengthAdjust="spacingAndGlyphs" fill="#e8141c" stroke="#e8141c" stroke-width="1.4">R</text>
<text transform="translate(49.0 466.0) skewX(-4)" x="0" y="0" font-family="Liberation Serif, serif" font-style="italic" font-weight="normal" font-size="40" textLength="9.0" lengthAdjust="spacingAndGlyphs" fill="#e8141c" stroke="#e8141c" stroke-width="1.2">’</text>
<text transform="translate(54.5 470.5) skewX(-6)" x="0" y="0" font-family="Liberation Serif, serif" font-style="italic" font-weight="normal" font-size="35" textLength="24.0" lengthAdjust="spacingAndGlyphs" fill="#e8141c" stroke="#e8141c" stroke-width="1.3">S</text>
<text transform="translate(91.0 468.0) skewX(-14)" x="0" y="0" font-family="Liberation Serif, serif" font-style="italic" font-weight="normal" font-size="20" textLength="61.0" lengthAdjust="spacingAndGlyphs" fill="#e8141c" stroke="#e8141c" stroke-width="0.5">Racing</text>
<text transform="translate(160.0 468.0) skewX(-14)" x="0" y="0" font-family="Liberation Serif, serif" font-style="italic" font-weight="normal" font-size="20" textLength="65.5" lengthAdjust="spacingAndGlyphs" fill="#e8141c" stroke="#e8141c" stroke-width="0.5">Service</text>
<g transform="translate(378.0 458.3) skewX(0)">
<text x="0.8" y="3.6" font-family="Liberation Sans, sans-serif" font-style="italic" font-weight="bold" font-size="21" textLength="96.0" lengthAdjust="spacingAndGlyphs" fill="#1848c8" stroke="#1848c8" stroke-width="1.8" stroke-linejoin="round">Dyna</text>
<text x="0" y="0" font-family="Liberation Sans, sans-serif" font-style="italic" font-weight="bold" font-size="21" textLength="96.0" lengthAdjust="spacingAndGlyphs" fill="#fff" stroke="#fff" stroke-width="2.8" stroke-linejoin="round">Dyna</text>
<text x="0" y="0" font-family="Liberation Sans, sans-serif" font-style="italic" font-weight="bold" font-size="21" textLength="96.0" lengthAdjust="spacingAndGlyphs" fill="#d81424" stroke="#d81424" stroke-width="1.8" stroke-linejoin="round">Dyna</text>
</g>
<g transform="translate(476.0 458.3) skewX(0)">
<text x="0.8" y="3.6" font-family="Liberation Sans, sans-serif" font-style="italic" font-weight="bold" font-size="21" textLength="101.0" lengthAdjust="spacingAndGlyphs" fill="#d81424" stroke="#d81424" stroke-width="1.8" stroke-linejoin="round">pack</text>
<text x="0" y="0" font-family="Liberation Sans, sans-serif" font-style="italic" font-weight="bold" font-size="21" textLength="101.0" lengthAdjust="spacingAndGlyphs" fill="#fff" stroke="#fff" stroke-width="2.8" stroke-linejoin="round">pack</text>
<text x="0" y="0" font-family="Liberation Sans, sans-serif" font-style="italic" font-weight="bold" font-size="21" textLength="101.0" lengthAdjust="spacingAndGlyphs" fill="#1848c8" stroke="#1848c8" stroke-width="1.8" stroke-linejoin="round">pack</text>
</g>
<text x="432" y="474.8" font-size="6.8" font-weight="bold" fill="#1430b8" stroke="#1430b8" stroke-width="0.3" textLength="43" lengthAdjust="spacing">CHASSIS</text>
<text x="497.5" y="474.8" font-size="6.8" font-weight="bold" fill="#1430b8" stroke="#1430b8" stroke-width="0.3" textLength="83.5" lengthAdjust="spacing">DYNAMOMETERS</text>
</svg>
</body></html>
